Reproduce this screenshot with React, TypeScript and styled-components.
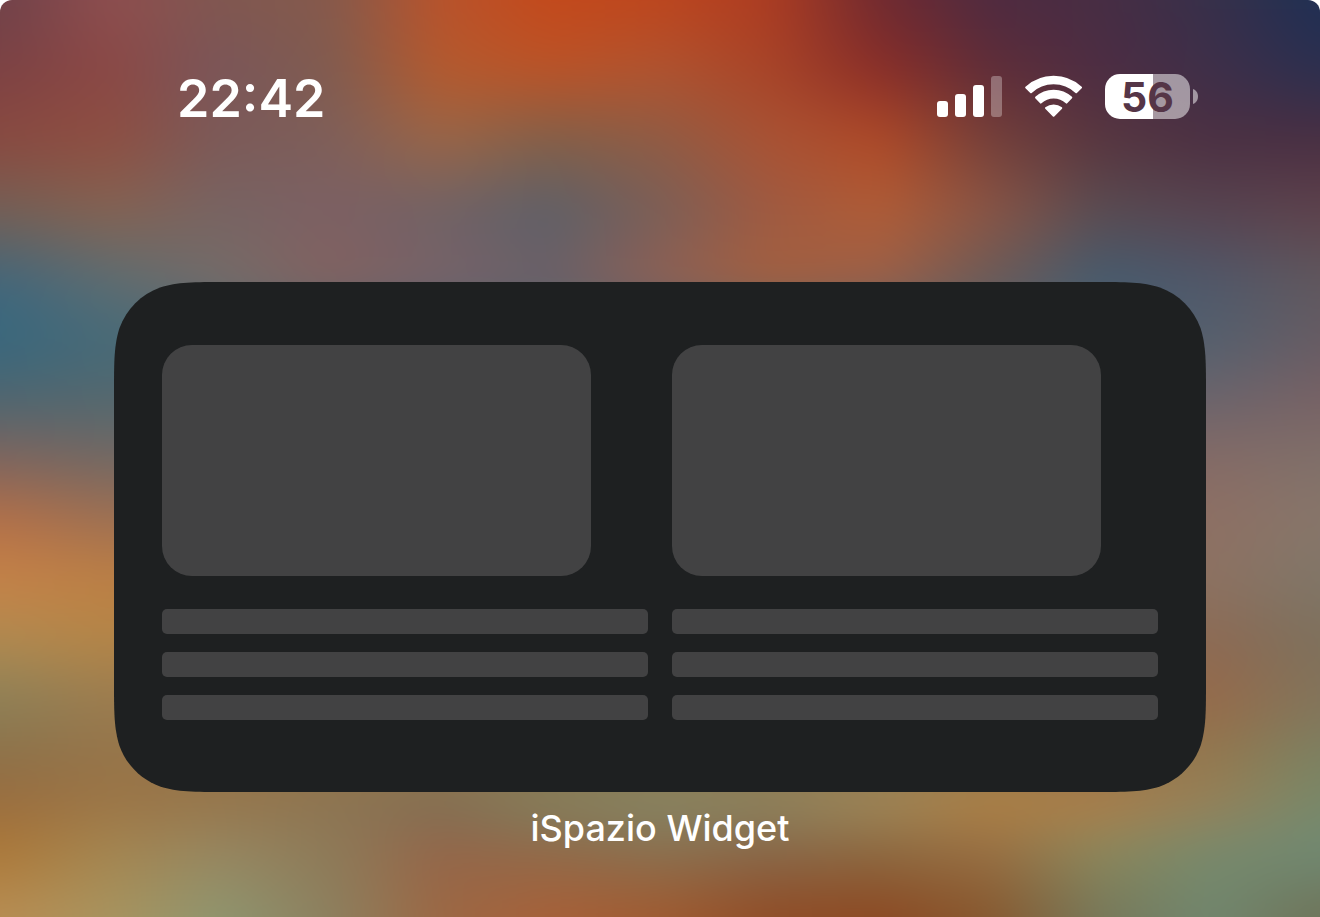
import React from "react";
import styled, { createGlobalStyle } from "styled-components";

const GlobalStyle = createGlobalStyle`
  *, *::before, *::after { box-sizing: border-box; }
  body {
    margin: 0;
    background: #fff;
    font-family: Inter, "Liberation Sans", sans-serif;
  }
`;

/* Wallpaper: a colour mesh. Every row is a horizontal gradient that fades into the next one. */
type MeshRow = { y: number; colors: string[] };

const mesh: MeshRow[] = [
  { y: 0, colors: ["#70424a", "#8e4e4f", "#805750", "#855a4c", "#b8532c", "#c4491b", "#bd461e", "#ac3c22", "#702a30", "#4f2b40", "#472d44", "#37304a", "#1f3054"] },
  { y: 70, colors: ["#7d4244", "#8b4845", "#7a565a", "#805c50", "#b45a2e", "#bb5428", "#b05430", "#a84428", "#8a2e28", "#602d38", "#4d2d43", "#3f2f49", "#2c2f4f"] },
  { y: 140, colors: ["#8a4a40", "#8e4f42", "#7c5a58", "#7e5f5a", "#996648", "#826049", "#8f5c45", "#aa5334", "#b04a27", "#75403a", "#58363f", "#4c3042", "#4a2f42"] },
  { y: 210, colors: ["#756055", "#856352", "#776463", "#7c6064", "#706266", "#5d6069", "#7a5f58", "#9e5a42", "#b15d36", "#8a5545", "#5a4c52", "#584450", "#5e424c"] },
  { y: 280, colors: ["#42677c", "#5d6d72", "#766c68", "#84625f", "#786268", "#6c6067", "#8f6054", "#a5603f", "#9c6048", "#6b5b58", "#445c70", "#50586a", "#60585e"] },
  { y: 340, colors: ["#38687e", "#466a78", "#54606e", "#665c64"] },
  { y: 400, colors: ["#4f6670", "#54686f", "#6c646c", "#786265"] },
  { y: 460, colors: ["#80655e", "#746863", "#856b66", "#80706a"] },
  { y: 520, colors: ["#b47048", "#a07052", "#8e7064", "#88766a"] },
  { y: 580, colors: ["#c68348", "#be8044", "#8c7262", "#807668"] },
  { y: 640, colors: ["#b08a50", "#b48648", "#8c6a54", "#7e705c"] },
  { y: 700, colors: ["#8c8058", "#9a7c50", "#966a4a", "#84745a"] },
  { y: 760, colors: ["#8e7048", "#957449", "#92794f", "#7c8262"] },
  { y: 800, colors: ["#9a6e40", "#9c7546", "#96764c", "#8c7452", "#807055", "#80805f", "#848766", "#8c8560", "#a0895a", "#b08245", "#ae7c48", "#988058", "#7a8868"] },
  { y: 850, colors: ["#ac7838", "#a48550", "#978660", "#8e7a58", "#94664a", "#906a4a", "#8a7050", "#88684a", "#8c6a42", "#987044", "#8c885c", "#788a6c", "#708a74"] },
  { y: 917, colors: ["#b88e54", "#a8945f", "#8e9670", "#8c805f", "#9c6844", "#a86038", "#a05a30", "#904c26", "#8c4822", "#86582f", "#76785a", "#70866e", "#6f7358"] },
];

const edgeStops = [0, 1 / 12, 11 / 12, 1];

const Wallpaper = styled.svg`
  grid-area: 1 / 1;
  width: 100%;
  height: 100%;
  min-height: 0;
`;

function MeshWallpaper() {
  return (
    <Wallpaper viewBox="0 0 1320 917" preserveAspectRatio="none" aria-hidden="true">
      <defs>
        <filter id="soften" filterUnits="userSpaceOnUse" x="-80" y="-80" width="1480" height="1077" colorInterpolationFilters="sRGB">
          <feGaussianBlur stdDeviation="22" />
        </filter>
        {mesh.map((row, i) => (
          <React.Fragment key={row.y}>
            <linearGradient id={`row${i}`} gradientUnits="userSpaceOnUse" x1="0" y1="0" x2="1320" y2="0">
              {row.colors.map((color, c) => (
                <stop
                  key={c}
                  offset={row.colors.length === 4 ? edgeStops[c] : c / (row.colors.length - 1)}
                  stopColor={color}
                />
              ))}
            </linearGradient>
            {i > 0 && (
              <>
                <linearGradient id={`fade${i}`} gradientUnits="userSpaceOnUse" x1="0" y1={mesh[i - 1].y} x2="0" y2={row.y}>
                  <stop offset="0" stopColor="#fff" stopOpacity="0" />
                  <stop offset="1" stopColor="#fff" />
                </linearGradient>
                <mask id={`mask${i}`} maskUnits="userSpaceOnUse" x="-80" y="-80" width="1480" height="1077">
                  <rect x="-80" y="-80" width="1480" height="1077" fill={`url(#fade${i})`} />
                </mask>
              </>
            )}
          </React.Fragment>
        ))}
      </defs>
      <g filter="url(#soften)">
        {mesh.map((row, i) => (
          <rect
            key={row.y}
            x="-80"
            y="-80"
            width="1480"
            height="1077"
            fill={`url(#row${i})`}
            mask={i > 0 ? `url(#mask${i})` : undefined}
          />
        ))}
      </g>
    </Wallpaper>
  );
}

const Screen = styled.div`
  display: grid;
  grid-template: minmax(0, 1fr) / minmax(0, 1fr);
  min-height: 100vh;
  border-radius: 12px 12px 0 0;
  overflow: hidden;
  contain: paint;
`;

const Content = styled.div`
  grid-area: 1 / 1;
  z-index: 1;
  display: flex;
  flex-direction: column;
  color: #fff;
`;

const StatusBar = styled.header`
  display: flex;
  justify-content: space-between;
  align-items: flex-start;
  margin: 74px 122px 158px 177px;
`;

const Clock = styled.time`
  font-size: 52px;
  line-height: 50px;
  font-weight: 600;
`;

const StatusIcons = styled.div`
  display: flex;
  align-items: center;
  gap: 22px;
`;

const Icon = styled.svg`
  display: block;
  fill: currentColor;
`;

const BatteryWrap = styled.div`
  display: flex;
  align-items: center;
  gap: 3px;
`;

const BatteryBody = styled.div<{ $level: number }>`
  width: 85px;
  height: 45px;
  border-radius: 15px;
  background: linear-gradient(
    90deg,
    #fff ${(p) => p.$level}%,
    rgba(255, 255, 255, 0.5) ${(p) => p.$level}%
  );
  color: #553547;
  font-size: 41px;
  line-height: 46px;
  font-weight: 700;
  text-align: center;
`;

const Main = styled.main`
  display: flex;
  flex-direction: column;
  padding: 0 114px 60px;
`;

/* Continuous-curvature corners, sliced so that they keep their shape at any width. */
const roundedCard = [
  "M112 0H128",
  "C160.500 0 176.600 0 193.900 5.500C212.800 12.300 227.700 27.200 234.500 46.100C240 63.400 240 79.500 240 112",
  "V128",
  "C240 160.500 240 176.600 234.500 193.900C227.700 212.800 212.800 227.700 193.900 234.500C176.600 240 160.500 240 128 240",
  "H112",
  "C79.500 240 63.400 240 46.100 234.500C27.200 227.700 12.300 212.800 5.500 193.900C0 176.600 0 160.500 0 128",
  "V112",
  "C0 79.500 0 63.400 5.500 46.100C12.300 27.200 27.200 12.300 46.100 5.500C63.400 0 79.500 0 112 0Z",
].join("");

const cardImage = `url("data:image/svg+xml,%3Csvg xmlns='http://www.w3.org/2000/svg' width='240' height='240'%3E%3Cpath fill='%231e2021' d='${roundedCard}'/%3E%3C/svg%3E")`;

const Widget = styled.section`
  display: grid;
  grid-template-columns: 1fr 1fr;
  gap: 24px;
  padding: 62px 47px 71px;
  border: 1px solid transparent;
  border-image: ${cardImage} 118 fill / 118px stretch;
`;

const Article = styled.div`
  display: flex;
  flex-direction: column;
  gap: 18px;
`;

const Thumbnail = styled.div`
  height: 231px;
  margin: 0 57px 15px 0;
  border-radius: 30px;
  background: #424243;
`;

const TextLine = styled.div`
  height: 25px;
  border-radius: 5px;
  background: #424243;
`;

const WidgetName = styled.p`
  margin: 14px 0 0;
  font-size: 36px;
  line-height: 45px;
  font-weight: 500;
  text-align: center;
`;

function SignalIcon() {
  return (
    <Icon width="66" height="41" viewBox="0 0 66 41" role="img" aria-label="Signal">
      <rect x="0" y="25" width="11" height="16" rx="3" />
      <rect x="18" y="18" width="11" height="23" rx="3" />
      <rect x="36" y="9" width="11" height="32" rx="3" />
      <rect x="54" y="0" width="11" height="41" rx="3" opacity="0.3" />
    </Icon>
  );
}

function WifiIcon() {
  return (
    <Icon width="58" height="43" viewBox="0 0 58 43" role="img" aria-label="Wi-Fi">
      <g stroke="currentColor" strokeWidth="2" strokeLinejoin="round">
        <path d="M1.200 12.500A40.500 40.500 0 0 1 56 12.500L51.200 17.300A33 33 0 0 0 6 17.300Z" />
        <path d="M11 22.600A26 26 0 0 1 46.300 22.600L41.500 27.600A19 19 0 0 0 15.800 27.600Z" />
        <path d="M21 33A12.500 12.500 0 0 1 36.300 33L28.600 40.800Z" />
      </g>
    </Icon>
  );
}

function Battery({ level }: { level: number }) {
  return (
    <BatteryWrap>
      <BatteryBody $level={level}>{level}</BatteryBody>
      <Icon width="5" height="15" viewBox="0 0 5 15" aria-hidden="true">
        <path d="M0 0C3 1 5 4 5 7.500S3 14 0 15Z" opacity="0.5" />
      </Icon>
    </BatteryWrap>
  );
}

function ArticlePlaceholder() {
  return (
    <Article>
      <Thumbnail />
      <TextLine />
      <TextLine />
      <TextLine />
    </Article>
  );
}

export default function App() {
  return (
    <>
      <GlobalStyle />
      <Screen>
        <MeshWallpaper />
        <Content>
          <StatusBar>
            <Clock>22:42</Clock>
            <StatusIcons>
              <SignalIcon />
              <WifiIcon />
              <Battery level={56} />
            </StatusIcons>
          </StatusBar>
          <Main>
            <Widget aria-label="iSpazio Widget">
              <ArticlePlaceholder />
              <ArticlePlaceholder />
            </Widget>
            <WidgetName>iSpazio Widget</WidgetName>
          </Main>
        </Content>
      </Screen>
    </>
  );
}
